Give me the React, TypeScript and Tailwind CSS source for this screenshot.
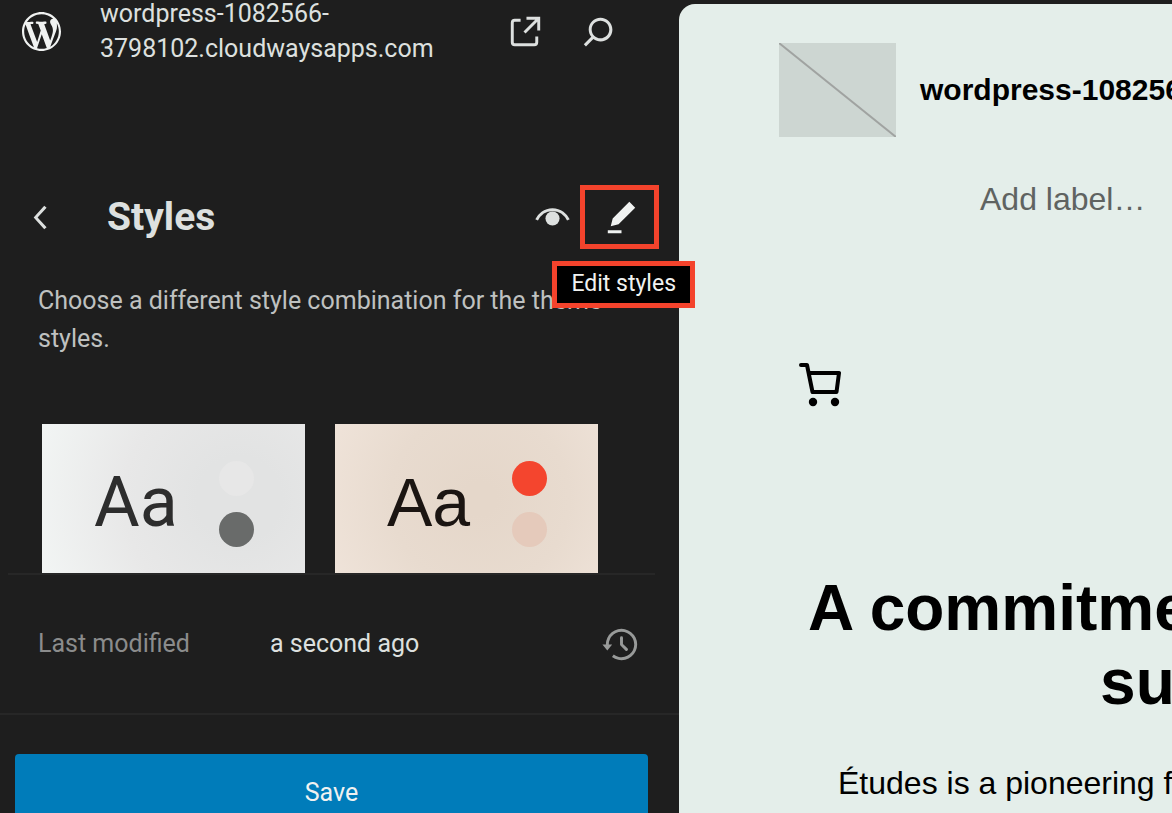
import type { ReactNode } from 'react';

interface IconProps {
  children: ReactNode;
  className?: string;
}

function Icon({ children, className = '' }: IconProps) {
  return (
    <svg viewBox="0 0 24 24" fill="currentColor" aria-hidden="true" className={`size-[47px] shrink-0 ${className}`}>
      {children}
    </svg>
  );
}

function WordPressLogo() {
  return (
    <svg viewBox="0 0 20 20" fill="currentColor" aria-hidden="true" className="size-[39px] text-[#f0f2f1]">
      <path d="M20 10c0-5.51-4.49-10-10-10C4.48 0 0 4.49 0 10c0 5.52 4.48 10 10 10 5.51 0 10-4.48 10-10zM7.78 15.37L4.37 6.22c.55-.02 1.17-.08 1.17-.08.5-.06.44-1.13-.06-1.11 0 0-1.45.11-2.37.11-.18 0-.37 0-.58-.01C4.12 2.69 6.87 1.11 10 1.11c2.33 0 4.45.87 6.05 2.34-.68-.11-1.65.39-1.65 1.58 0 .74.45 1.36.9 2.1.35.61.55 1.36.55 2.46 0 1.49-1.4 5-1.4 5l-3.03-8.37c.54-.02.82-.17.82-.17.5-.05.44-1.25-.06-1.22 0 0-1.44.12-2.38.12-.87 0-2.33-.12-2.33-.12-.5-.03-.56 1.2-.06 1.22l.92.08 1.26 3.41zM17.41 10c.24-.64.74-1.87.43-4.25.7 1.29 1.05 2.71 1.05 4.25 0 3.29-1.73 6.24-4.4 7.78.97-2.59 1.94-5.2 2.92-7.78zM6.1 18.09C3.12 16.65 1.11 13.53 1.11 10c0-1.3.23-2.48.72-3.59C3.25 10.3 4.67 14.2 6.1 18.09zm4.03-6.63l2.58 6.98c-.86.29-1.76.45-2.71.45-.79 0-1.57-.11-2.29-.33.81-2.38 1.62-4.74 2.42-7.1z" />
    </svg>
  );
}

interface StyleCardProps {
  label: string;
  background: string;
  text: string;
  topDot: string;
  bottomDot: string;
}

function StyleCard({ label, background, text, topDot, bottomDot }: StyleCardProps) {
  return (
    <button
      type="button"
      aria-label={label}
      className={`flex h-[149px] flex-1 items-center justify-between pt-2.5 pr-[51px] pl-[52px] ${background}`}
    >
      <span className={`pb-1 leading-none ${text}`}>Aa</span>
      <span className="flex flex-col gap-4">
        <span className={`size-[35px] rounded-full ${topDot}`} />
        <span className={`size-[35px] rounded-full ${bottomDot}`} />
      </span>
    </button>
  );
}

function SiteHeader() {
  return (
    <header className="-mt-1 flex items-center pr-[57px] pl-[22px] text-[#dde0df]">
      <a href="#dashboard" aria-label="Dashboard">
        <WordPressLogo />
      </a>
      <p className="ml-[39px] flex-1 text-[25px] leading-[35px]">
        wordpress-1082566-
        <br />
        3798102.cloudwaysapps.com
      </p>
      <a href="#site" aria-label="View site">
        <Icon>
          <path d="M19.5 4.5h-7V6h4.44l-5.97 5.97 1.06 1.06L18 7.06v4.44h1.5v-7Zm-13 1a2 2 0 0 0-2 2v10a2 2 0 0 0 2 2h10a2 2 0 0 0 2-2v-3H17v3a.5.5 0 0 1-.5.5h-10a.5.5 0 0 1-.5-.5v-10a.5.5 0 0 1 .5-.5h3V5.5h-3Z" />
        </Icon>
      </a>
      <button type="button" aria-label="Search" className="ml-[26px]">
        <Icon>
          <path d="M13 5c-3.3 0-6 2.7-6 6 0 1.4.5 2.7 1.3 3.7l-3.8 3.8 1.1 1.1 3.8-3.8c1 .8 2.3 1.3 3.7 1.3 3.3 0 6-2.7 6-6S16.3 5 13 5zm0 10.5c-2.5 0-4.5-2-4.5-4.5s2-4.5 4.5-4.5 4.500 2 4.500 4.500-2 4.500-4.500 4.500z" />
        </Icon>
      </button>
    </header>
  );
}

function TitleBar() {
  return (
    <div className="mt-[119px] flex items-center pr-5 pl-[18px] text-[#dde0df]">
      <button type="button" aria-label="Back">
        <Icon>
          <path d="M14.6 7l-1.2-1L8 12l5.4 6 1.2-1-4.6-5z" />
        </Icon>
      </button>
      <h1 className="ml-[42px] flex-1 text-[39px] leading-[48px] font-bold">Styles</h1>
      <button type="button" aria-label="Style Book">
        <Icon>
          <path d="M3.900 13.200c1.200-2.500 4-5.200 8.100-5.200s6.900 2.700 8.100 5.200" fill="none" stroke="currentColor" strokeWidth="1.5" />
          <circle cx="12" cy="12.5" r="3.6" />
        </Icon>
      </button>
      <button
        type="button"
        aria-describedby="edit-styles-tip"
        aria-label="Edit styles"
        className="relative ml-1 flex h-16 w-[79px] items-center justify-center border-5 border-[#f4432c] pl-1 text-[#f0f2f1]"
      >
        <Icon>
          <path d="m19 7-3-3-8.5 8.5-1 4 4-1L19 7Zm-7 11.5H5V20h7v-1.5Z" />
        </Icon>
        <span
          id="edit-styles-tip"
          role="tooltip"
          className="absolute top-[71px] -right-[41px] z-10 border-5 border-[#f4432c] bg-black px-3.5 pb-px text-[23px] leading-9 whitespace-nowrap"
        >
          Edit styles
        </span>
      </button>
    </div>
  );
}

function Sidebar() {
  return (
    <aside className="z-10 flex w-[679px] shrink-0 flex-col">
      <SiteHeader />
      <TitleBar />
      <p className="mt-[33px] pr-[70px] pl-[38px] text-[25px] leading-[38px] text-[#bfc1c0]">
        Choose a different style combination for the theme styles.
      </p>
      <div className="mt-[66px] flex gap-[30px] pr-[81px] pl-[42px]">
        <StyleCard
          label="Default"
          background="bg-[radial-gradient(circle_at_75%_50%,#e2e3e3_20%,#e8e8e8_55%,#f2f5f4_100%)]"
          text="text-[70px] font-[Roboto,sans-serif] text-[#2d2d2d]"
          topDot="bg-[#e7e7e7]"
          bottomDot="bg-[#696b6a]"
        />
        <StyleCard
          label="Warm"
          background="bg-[radial-gradient(circle_at_55%_50%,#e5d7ca_10%,#e8dbcf_55%,#efe3d9_100%)]"
          text="text-[68px] font-['Liberation_Sans',sans-serif] text-[#1b1512]"
          topDot="bg-[#f4452e]"
          bottomDot="bg-[#e5cabb]"
        />
      </div>
      <div className="mr-6 ml-2 flex h-[140px] shrink-0 items-center border-t-2 border-[#272727] pr-2.5 pl-[30px] text-[25px]">
        <span className="w-[232px] text-[#8b8c8c]">Last modified</span>
        <span className="flex-1 text-[#dde0df]">a second ago</span>
        <button type="button" aria-label="Revisions" className="text-[#989a99]">
          <Icon>
            <path d="M5.5 12h1.75l-2.5 3-2.5-3H4a8 8 0 113.134 6.35l.907-1.194A6.5 6.5 0 105.5 12zm9.53 1.97l-2.28-2.28V8.5a.75.75 0 00-1.5 0V12a.747.747 0 00.218.529l1.282-.84-1.28.842 2.5 2.5a.75.75 0 101.06-1.061z" />
          </Icon>
        </button>
      </div>
      <div className="shrink-0 border-t-2 border-[#272727] pt-[39px] pr-[31px] pl-[15px]">
        <button type="button" className="h-[78px] w-full rounded-sm bg-[#007cba] text-[25px] text-[#f0f2f1]">
          Save
        </button>
      </div>
    </aside>
  );
}

function CartIcon() {
  return (
    <svg viewBox="0 0 42 44" aria-hidden="true" className="h-11 w-[42px]">
      <path
        d="M2 2h6l5.500 27h24l2.500-19H10"
        fill="none"
        stroke="currentColor"
        strokeWidth="4"
        strokeLinecap="round"
        strokeLinejoin="round"
      />
      <circle cx="14" cy="39" r="4.200" />
      <circle cx="36" cy="39" r="4.200" />
    </svg>
  );
}

function Preview() {
  return (
    <main className="mt-1 min-w-0 flex-1 overflow-hidden rounded-tl-2xl bg-[#e4eeea] font-['Liberation_Sans',Arial,sans-serif] text-black">
      <div className="mt-[39px] ml-[100px] flex items-center gap-6">
        <svg viewBox="0 0 117 94" aria-hidden="true" className="h-[94px] w-[117px] shrink-0 bg-[#cdd6d2]">
          <path d="M0 0 117 94" stroke="#a0a3a1" strokeWidth="2" />
        </svg>
        <p className="text-[30px] leading-9 font-bold whitespace-nowrap">wordpress-1082566-3798102.cloudwaysapps.com</p>
      </div>
      <p className="mt-11 ml-[301px] text-[32px] leading-9 whitespace-nowrap text-[#5f6361]">Add label…</p>
      <button type="button" aria-label="Cart" className="mt-[146px] ml-[120px] block">
        <CartIcon />
      </button>
      <h2 className="mt-[164px] ml-[129px] w-max text-center text-[64px] leading-[74px] font-bold whitespace-nowrap">
        A commitment to innovation and
        <br />
        sustainability
      </h2>
      <p className="mt-[45px] ml-[159px] text-[32px] leading-[38px] whitespace-nowrap">
        Études is a pioneering firm that seamlessly merges creativity
      </p>
    </main>
  );
}

export default function App() {
  return (
    <div className="flex h-screen overflow-hidden bg-[#1e1e1e] font-[Roboto,sans-serif]">
      <Sidebar />
      <Preview />
    </div>
  );
}
